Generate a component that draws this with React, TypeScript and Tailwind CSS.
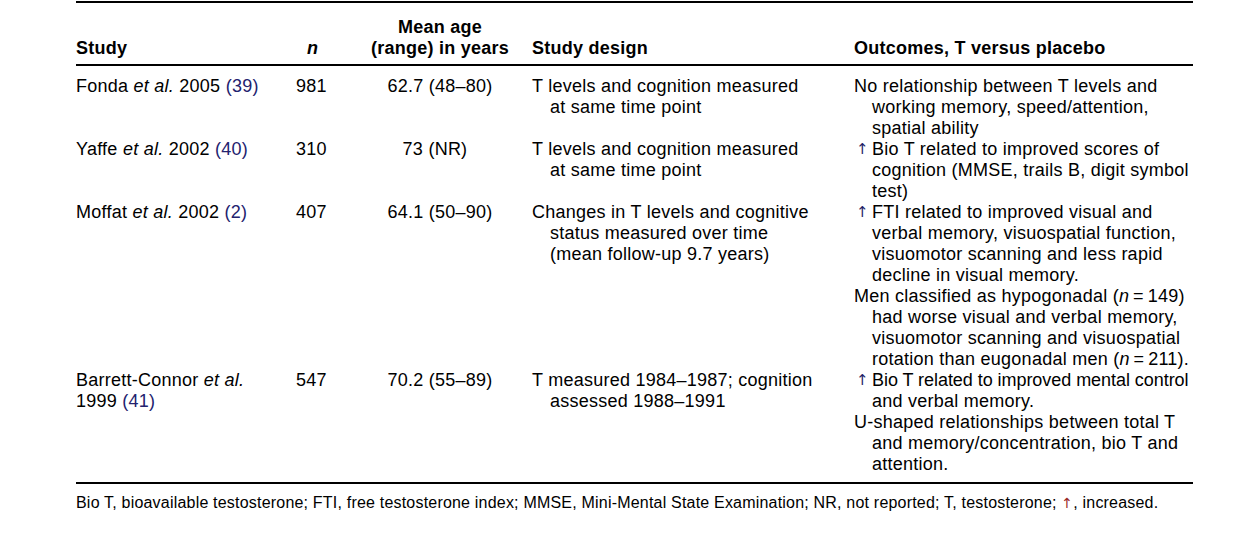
import React from "react";

const Ref = ({ c }: { c: string }) => <span className="text-[#23226e]">({c})</span>;
const Up = () => (
  <span className="inline-block align-top h-[21px] leading-[21px] w-[18px] pl-[2px] text-[#1f1d66] font-['DejaVu_Sans',sans-serif] text-[15px]">
    ↑
  </span>
);

const Lines = ({ lines }: { lines: React.ReactNode[] }) => (
  <div>
    {lines.map((l, i) => (
      <div key={i} className={"whitespace-nowrap " + (i === 0 ? "" : "pl-[18px]")}>
        {l}
      </div>
    ))}
  </div>
);

const ArrowLines = ({ lines, tight }: { lines: React.ReactNode[]; tight?: boolean }) => (
  <div>
    {lines.map((l, i) => (
      <div key={i} className={"whitespace-nowrap " + (i === 0 ? "" : "pl-[18px]")}>
        {i === 0 ? <Up /> : null}
        <span className={i === 0 && tight ? "tracking-[-0.05px]" : ""}>{l}</span>
      </div>
    ))}
  </div>
);

type Row = {
  study: React.ReactNode[];
  n: string;
  age: string;
  ageClass?: string;
  design: string[];
  outcomes: React.ReactNode;
};

const rows: Row[] = [
  {
    study: [
      <>
        Fonda <i>et al.</i> 2005 <Ref c="39" />
      </>,
    ],
    n: "981",
    age: "62.7 (48–80)",
    design: ["T levels and cognition measured", "at same time point"],
    outcomes: (
      <Lines
        lines={["No relationship between T levels and", "working memory, speed/attention,", "spatial ability"]}
      />
    ),
  },
  {
    study: [
      <>
        Yaffe <i>et al.</i> 2002 <Ref c="40" />
      </>,
    ],
    n: "310",
    age: "73 (NR)",
    ageClass: "pr-[10px]",
    design: ["T levels and cognition measured", "at same time point"],
    outcomes: (
      <ArrowLines
        lines={["Bio T related to improved scores of", "cognition (MMSE, trails B, digit symbol", "test)"]}
      />
    ),
  },
  {
    study: [
      <>
        Moffat <i>et al.</i> 2002 <Ref c="2" />
      </>,
    ],
    n: "407",
    age: "64.1 (50–90)",
    design: ["Changes in T levels and cognitive", "status measured over time", "(mean follow-up 9.7 years)"],
    outcomes: (
      <>
        <ArrowLines
          lines={[
            "FTI related to improved visual and",
            "verbal memory, visuospatial function,",
            "visuomotor scanning and less rapid",
            "decline in visual memory.",
          ]}
        />
        <Lines
          lines={[
            <>
              Men classified as hypogonadal (<i>n</i>{"\u2009=\u2009"}149)
            </>,
            "had worse visual and verbal memory,",
            "visuomotor scanning and visuospatial",
            <>
              rotation than eugonadal men (<i>n</i>{"\u2009=\u2009"}211).
            </>,
          ]}
        />
      </>
    ),
  },
  {
    study: [
      <>
        Barrett-Connor <i>et al.</i>
      </>,
      <>
        1999 <Ref c="41" />
      </>,
    ],
    n: "547",
    age: "70.2 (55–89)",
    design: ["T measured 1984–1987; cognition", "assessed 1988–1991"],
    outcomes: (
      <>
        <ArrowLines tight lines={["Bio T related to improved mental control", "and verbal memory."]} />
        <Lines
          lines={["U-shaped relationships between total T", "and memory/concentration, bio T and", "attention."]}
        />
      </>
    ),
  },
];

const cols = "grid grid-cols-[220px_52px_184px_322px_339px]";

export default function App() {
  return (
    <div className="w-[1241px] h-[546px] bg-white pl-[76px] pt-[1px] text-black font-['Liberation_Sans',Arial,sans-serif] text-[18px] leading-[21px] tracking-[0.25px]">
      <div className="w-[1117px] border-t-2 border-black">
        <div className={cols + " items-end pt-[14px] pb-[5px] border-b-2 border-black font-bold"}>
          <div>Study</div>
          <div className="pl-[11px] italic">n</div>
          <div className="text-center">
            <div>Mean age</div>
            <div>(range) in years</div>
          </div>
          <div>Study design</div>
          <div>Outcomes, T versus placebo</div>
        </div>
        <div className="pt-[10px] pb-[7px] border-b-2 border-black">
          {rows.map((r, i) => (
            <div key={i} className={cols}>
              <div>
                {r.study.map((s, j) => (
                  <div key={j} className="whitespace-nowrap">
                    {s}
                  </div>
                ))}
              </div>
              <div>{r.n}</div>
              <div className={"text-center " + (r.ageClass ?? "")}>{r.age}</div>
              <Lines lines={r.design} />
              <div>{r.outcomes}</div>
            </div>
          ))}
        </div>
      </div>
      <div className="pt-[9px] text-[16px] leading-[20px] tracking-[0.2px] whitespace-nowrap">
        Bio T, bioavailable testosterone; FTI, free testosterone index; MMSE, Mini-Mental State Examination; NR, not
        reported; T, testosterone; <span className="text-[#9a2a25] font-['DejaVu_Sans',sans-serif] text-[14px]">↑</span>,
        increased.
      </div>
    </div>
  );
}
